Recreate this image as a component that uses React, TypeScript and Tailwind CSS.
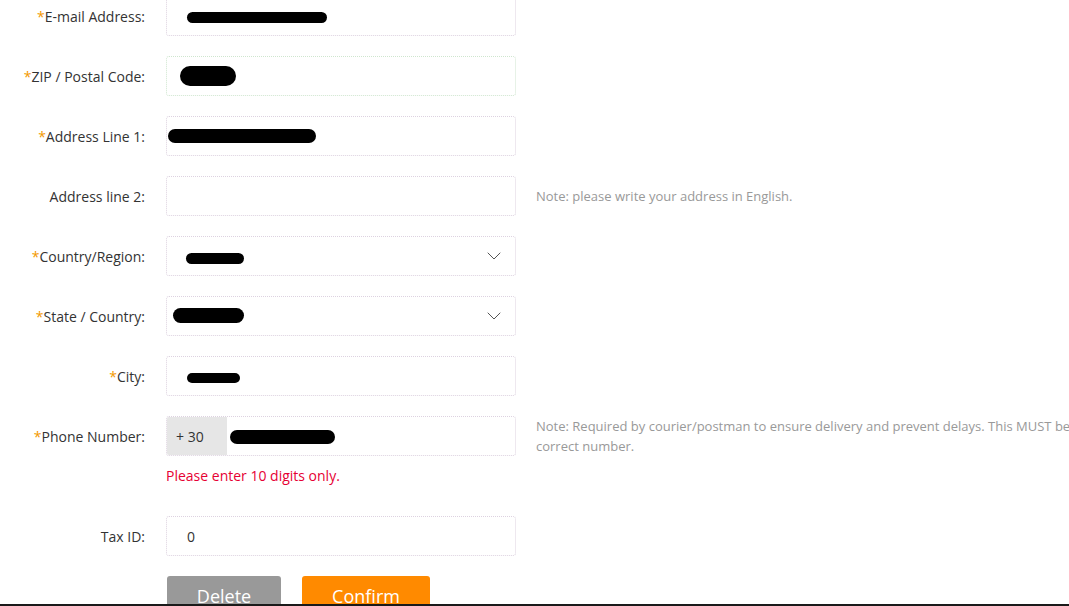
import { ChevronDown } from "lucide-react";
import type { ReactNode } from "react";

// black marker blots over the redacted values
function Blot({ cls }: { cls: string }) {
  return <span className={`inline-block bg-black rounded-full ${cls}`} />;
}

function Row({
  label,
  required,
  children,
  note,
  noteTop = "pt-[10px]",
  after,
}: {
  label: string;
  required?: boolean;
  children: ReactNode;
  note?: ReactNode;
  noteTop?: string;
  after?: ReactNode;
}) {
  return (
    <div className="flex items-start">
      <div className="w-[145px] shrink-0 h-[40px] flex items-center justify-end text-[14px] text-[#333]">
        {required && <span className="text-[#f39800]">*</span>}
        {label}
      </div>
      <div className="ml-[21px] w-[350px] shrink-0">
        {children}
        {after}
      </div>
      {note && (
        <div className={`ml-[20px] w-[560px] shrink-0 ${noteTop} text-[13px] leading-[20px] text-[#999]`}>
          {note}
        </div>
      )}
    </div>
  );
}

function Box({ children }: { children?: ReactNode }) {
  return (
    <div className="h-[40px] rounded-[3px] border border-dotted border-[#ddd2e0] bg-white flex items-center pl-[20px] pr-[20px] text-[14px] text-[#333]">
      {children}
    </div>
  );
}

function Select({ children }: { children: ReactNode }) {
  return (
    <div className="h-[40px] rounded-[3px] border border-dotted border-[#ddd2e0] bg-white flex items-center pl-[19px] pr-[9px]">
      <div className="flex-1 flex items-center">{children}</div>
      <ChevronDown size={24} strokeWidth={1} className="text-[#555]" />
    </div>
  );
}

export default function App() {
  return (
    <div className="w-[1069px] h-[606px] overflow-hidden flex flex-col bg-white font-['Open_Sans',sans-serif]">
      <div className="flex-1 overflow-hidden">
        <div className="-mt-[4px] flex flex-col gap-[20px]">
          <Row label="E-mail Address:" required>
            <Box>
              <Blot cls="w-[140px] h-[11px] mt-[2px]" />
            </Box>
          </Row>
          <Row label="ZIP / Postal Code:" required>
            <div className="h-[40px] rounded-[3px] border border-dotted border-[#cfe6cf] bg-white flex items-center pl-[13px]">
              <Blot cls="w-[56px] h-[20px]" />
            </div>
          </Row>
          <Row label="Address Line 1:" required>
            <div className="h-[40px] rounded-[3px] border border-dotted border-[#ddd2e0] bg-white flex items-center pl-[1px]">
              <Blot cls="w-[148px] h-[14px]" />
            </div>
          </Row>
          <Row label="Address line 2:" note="Note: please write your address in English.">
            <Box />
          </Row>
          <Row label="Country/Region:" required>
            <Select>
              <Blot cls="w-[58px] h-[11px] mt-[4px]" />
            </Select>
          </Row>
          <Row label="State / Country:" required>
            <Select>
              <span className="-ml-[13px]">
                <Blot cls="w-[71px] h-[15px] mt-[4px]" />
              </span>
            </Select>
          </Row>
          <Row label="City:" required>
            <Box>
              <Blot cls="w-[53px] h-[10px] mt-[3px]" />
            </Box>
          </Row>
          <Row
            label="Phone Number:"
            required
            noteTop="pt-0"
            note="Note: Required by courier/postman to ensure delivery and prevent delays. This MUST be a correct number."
            after={
              <div className="mt-[10px] mb-[10px] h-[20px] leading-[20px] text-[14px] text-[#e60033]">
                Please enter 10 digits only.
              </div>
            }
          >
            <div className="h-[40px] rounded-[3px] border border-dotted border-[#ddd2e0] bg-white flex overflow-hidden">
              <div className="w-[60px] h-full bg-[#e6e6e6] flex items-center pl-[9px] text-[14px] text-[#333]">
                + 30
              </div>
              <div className="flex-1 flex items-center pl-[3px]">
                <Blot cls="w-[105px] h-[14px] mt-[2px]" />
              </div>
            </div>
          </Row>
          <Row label="Tax ID:">
            <Box>0</Box>
          </Row>
          <div className="flex ml-[167px] gap-[21px]">
            <button className="w-[114px] h-[40px] rounded-[3px] bg-[#999] text-white text-[18px] leading-[40px]">
              Delete
            </button>
            <button className="w-[128px] h-[40px] rounded-[3px] bg-[#ff8a00] text-white text-[18px] leading-[40px]">
              Confirm
            </button>
          </div>
        </div>
      </div>
      <div className="h-[2px] bg-[#1a1a1a]" />
    </div>
  );
}
